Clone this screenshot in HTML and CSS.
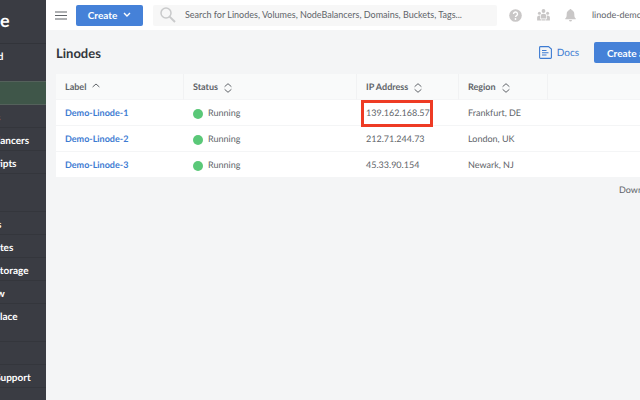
FILE: index.html
```html
<!DOCTYPE html>
<html lang="en">
<head>
<meta charset="utf-8">
<title>Linodes</title>
<link rel="stylesheet" href="styles.css">
</head>
<body>
<div class="app">
  <aside class="sidebar">
    <a class="logo" href="#">e</a>
    <nav class="nav">
      <a href="#">Managed</a>
      <span class="gap"></span>
      <a class="active" href="#" aria-label="Linodes"></a>
      <a href="#">Volumes</a>
      <a href="#">NodeBalancers</a>
      <a href="#">StackScripts</a>
      <a href="#" aria-label="Images"></a>
      <span class="gap"></span>
      <a href="#">Domains</a>
      <a href="#">Kubernetes</a>
      <a href="#">Object Storage</a>
      <a href="#">Longview</a>
      <a href="#">Marketplace</a>
      <span class="gap"></span>
      <a href="#" aria-label="Account"></a>
      <a href="#">Help &amp; Support</a>
    </nav>
  </aside>
  <div class="content">
    <header class="topbar">
      <button class="menu" aria-label="Menu"><svg width="12" height="9" viewBox="0 0 12 9"><path d="M0 1h12M0 4.500h12M0 8h12" stroke="#606469" stroke-width="1.200"/></svg></button>
      <button class="primary create">Create <svg width="8" height="6" viewBox="0 0 8 6" fill="none"><path d="M1 1l3 3 3-3" stroke="#fff" stroke-width="1.400"/></svg></button>
      <label class="search">
        <svg width="16" height="16" viewBox="0 0 16 16" fill="none" stroke="#c9cacb"><circle cx="6" cy="6" r="5" stroke-width="1.500"/><path d="M9.600 9.600L15 15" stroke-width="2"/></svg>
        <input type="text" aria-label="Search" placeholder="Search for Linodes, Volumes, NodeBalancers, Domains, Buckets, Tags...">
      </label>
      <div class="tools">
        <button aria-label="Help"><svg width="13" height="13" viewBox="0 0 13 13"><circle cx="6.500" cy="6.500" r="6.300" fill="#c9c7c7"/><path d="M4.500 5a2 2 0 1 1 3 1.700c-.7.4-1 .7-1 1.400" fill="none" stroke="#fff" stroke-width="1.400"/><circle cx="6.500" cy="10" r=".9" fill="#fff"/></svg></button>
        <button aria-label="Community"><svg width="13" height="12" viewBox="0 0 13 12" fill="#c9c7c7"><circle cx="6.500" cy="2" r="1.900"/><circle cx="2.400" cy="4.300" r="1.500"/><circle cx="10.600" cy="4.300" r="1.500"/><path d="M3.800 9.500V7q0-2.300 2.700-2.300T9.200 7v2.500zM.1 11.400V8.500q0-2 3-2v3.700h1.500v1.200zM12.900 11.400V8.500q0-2-3-2v3.700H8.400v1.200zM5 10.200h3v1.200H5z"/></svg></button>
        <button aria-label="Notifications"><svg width="11" height="13" viewBox="0 0 11 13" fill="#c9c7c7"><path d="M5.500 0c.7 0 1 .4 1 1 1.700.5 2.800 2 2.800 3.900 0 2.500.2 3.500 1.400 4.400v1H.3v-1c1.200-.9 1.400-1.900 1.400-4.400C1.700 3 2.800 1.500 4.500 1c0-.6.3-1 1-1zM4 11h3q-.2 1.500-1.500 1.500T4 11z"/></svg></button>
      </div>
      <a class="user" href="#">linode-demo</a>
    </header>
    <main>
      <div class="title">
        <h1>Linodes</h1>
        <a class="docs" href="#"><svg width="13" height="13" viewBox="0 0 13 13" fill="none" stroke="#3d7bd2" stroke-width="1.100"><path d="M1.500.6h8L12.400 3v8.500q0 .9-.9.900h-10q-.9 0-.9-.9v-10q0-.9.9-.9zM3 4.500h4.500M3 6.700h6.500M3 9h4.500"/></svg>Docs</a>
        <button class="primary add">Create a</button>
      </div>
      <table>
        <colgroup><col class="c-label"><col class="c-status"><col class="c-ip"><col class="c-region"><col></colgroup>
        <thead>
          <tr>
            <th>Label<svg width="8" height="10" viewBox="0 0 8 10" fill="none" stroke="#606469"><path d="M.6 4L4 1l3.400 3"/></svg></th>
            <th>Status<svg width="8" height="10" viewBox="0 0 8 10" fill="none" stroke="#606469"><path d="M.6 3.700L4 .7l3.400 3M.6 6.300l3.400 3 3.400-3"/></svg></th>
            <th>IP Address<svg width="8" height="10" viewBox="0 0 8 10" fill="none" stroke="#606469"><path d="M.6 3.700L4 .7l3.400 3M.6 6.300l3.400 3 3.400-3"/></svg></th>
            <th>Region<svg width="8" height="10" viewBox="0 0 8 10" fill="none" stroke="#606469"><path d="M.6 3.700L4 .7l3.400 3M.6 6.300l3.400 3 3.400-3"/></svg></th>
            <th></th>
          </tr>
        </thead>
        <tbody>
          <tr><td><a href="#">Demo-Linode-1</a></td><td><i class="dot"></i>Running</td><td class="marked">139.162.168.57</td><td>Frankfurt, DE</td><td></td></tr>
          <tr><td><a href="#">Demo-Linode-2</a></td><td><i class="dot"></i>Running</td><td>212.71.244.73</td><td>London, UK</td><td></td></tr>
          <tr><td><a href="#">Demo-Linode-3</a></td><td><i class="dot"></i>Running</td><td>45.33.90.154</td><td>Newark, NJ</td><td></td></tr>
        </tbody>
      </table>
      <div class="foot"><a class="download" href="#">Download</a></div>
    </main>
  </div>
</div>
</body>
</html>
```
FILE: styles.css
```css
* { box-sizing: border-box; }
body {
  margin: 0;
  font: 9px/12px Lato, "Liberation Sans", sans-serif;
  text-rendering: geometricPrecision;
  color: #606469;
  background: #f4f5f6;
}
a { color: inherit; text-decoration: none; }
button { font: inherit; border: 0; padding: 0; background: none; color: inherit; }
svg { display: block; flex: none; }

.app { display: flex; min-height: 100vh; overflow: hidden; }
.sidebar {
  flex: none;
  width: 46px;
  overflow: hidden;
  background: #3a3c43;
  color: #fff;
  font-weight: 700;
  font-size: 10px;
}
.logo {
  display: flex;
  align-items: center;
  height: 43px;
  padding-bottom: 4px;
  font-size: 18px;
}
.nav { display: flex; flex-direction: column; border-top: 1px solid #32343a; }
.nav a {
  display: flex;
  align-items: center;
  height: 23px;
  padding-top: 3px;
  text-indent: -38px;
  white-space: nowrap;
  border-bottom: 1px solid #34363c;
}
.nav .gap { height: 15px; border-bottom: 1px solid #34363c; }
.nav a:has(+ .gap) { border-bottom-color: transparent; }
.nav .active { background: #3f5649; border-bottom-color: #54615b; box-shadow: 0 -1px #54615b; }

.content { flex: 1; min-width: 0; }
.topbar {
  display: flex;
  align-items: center;
  height: 30px;
  padding-left: 9px;
  background: #fff;
}
.menu { margin-right: 9px; }
.primary {
  display: flex;
  align-items: center;
  height: 21px;
  background: #4581d8;
  color: #fff;
  font-weight: 700;
  font-size: 10px;
  white-space: nowrap;
  border-radius: 2px;
}
.create { width: 67px; justify-content: center; gap: 6px; flex: none; }
.search {
  flex: 1;
  display: flex;
  align-items: center;
  gap: 9px;
  height: 21px;
  margin-left: 10px;
  padding-left: 7px;
  background: #f7f7f7;
  border-radius: 2px;
}
.search input {
  flex: 1;
  min-width: 0;
  border: 0;
  padding: 0;
  background: none;
  font: inherit;
  color: #606469;
}
.search input::placeholder { color: #606469; opacity: 1; }
.tools { display: flex; align-items: center; gap: 15px; padding: 0 16px 0 12px; }
.user { width: 48px; overflow: hidden; white-space: nowrap; }

main { padding-left: 10px; }
.title { display: flex; align-items: center; height: 44px; padding-top: 1px; }
h1 { margin: 0 auto 0 0; font-size: 13px; line-height: 16px; color: #32363c; }
.docs { display: flex; align-items: center; gap: 5px; font-size: 10px; color: #3d7bd2; margin-right: 15px; }
.add { width: 46px; overflow: hidden; padding-left: 13px; border-radius: 2px 0 0 2px; }

table { width: 100%; table-layout: fixed; border-collapse: separate; border-spacing: 0; background: #fff; }
.c-label { width: 128px; }
.c-status { width: 173px; }
.c-ip { width: 102px; }
.c-region { width: 89px; }
th, td { height: 26px; padding: 1px 0 0 9px; text-align: left; white-space: nowrap; border-bottom: 1px solid #f4f5f6; }
th { background: #f9fafa; border-right: 1px solid #f1f2f3; font-weight: 700; }
th:last-child { border-right: 0; }
th svg { display: inline-block; vertical-align: middle; margin-left: 6px; }
td a { font-weight: 700; color: #3d7bd2; }
.dot {
  display: inline-block;
  width: 10px;
  height: 10px;
  margin-right: 5px;
  vertical-align: middle;
  border-radius: 50%;
  background: #5ac878;
}
.marked { position: relative; }
.marked::after {
  content: "";
  position: absolute;
  inset: 0 26px -2px 4px;
  border: 3px solid #ee3b24;
}
.foot { display: flex; justify-content: flex-end; padding-top: 6px; }
.download { width: 21px; overflow: hidden; white-space: nowrap; }
```
